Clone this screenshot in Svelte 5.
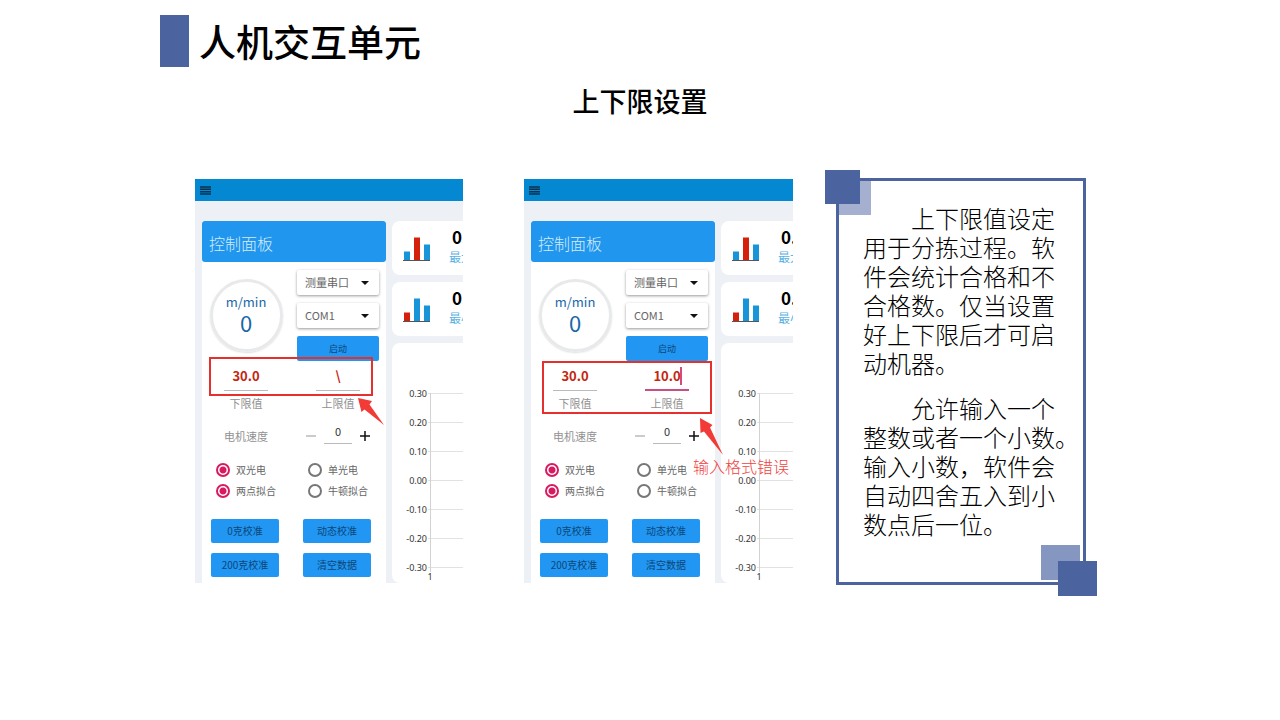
<script>
  const screens = [
    { id: 'a', low: '30.0', high: '\\', editing: false },
    { id: 'b', low: '30.0', high: '10.0', editing: true }
  ];
  const stats = [
    { value: '0.', label: '最大', bars: [9, 23, 16], hot: 1 },
    { value: '0.', label: '最小', bars: [9, 23, 16], hot: 0 }
  ];
  const ticks = ['0.30', '0.20', '0.10', '0.00', '-0.10', '-0.20', '-0.30'];
  const modes = [
    ['双光电', '单光电'],
    ['两点拟合', '牛顿拟合']
  ];
  const actions = ['0克校准', '动态校准', '200克校准', '清空数据'];
  const notes = [
    ['上下限值设定', '用于分拣过程。软', '件会统计合格和不', '合格数。仅当设置', '好上下限后才可启', '动机器。'],
    ['允许输入一个', '整数或者一个小数。', '输入小数，软件会', '自动四舍五入到小', '数点后一位。']
  ];
</script>

<main class="slide">
  <header class="title">
    <span class="marker"></span>
    <h1>人机交互单元</h1>
  </header>
  <h2>上下限设置</h2>

  <div class="content">
    <div class="shots">
      {#each screens as s}
        <section class="shot">
          <div class="appbar">
            <button class="menu" aria-label="菜单">
              <svg width="11" height="9" viewBox="0 0 11 9"><path d="M0 1h11M0 3.3h11M0 5.7h11M0 8h11" stroke="#06324f" stroke-width="1.4" /></svg>
            </button>
          </div>
          <div class="body">
            <div class="panel">
              <h3>控制面板</h3>
              <div class="grid top">
                <div class="dial"><span>m/min</span><b>0</b></div>
                <div class="stack">
                  <div class="pick"><select aria-label="测量串口"><option>测量串口</option></select></div>
                  <div class="pick"><select aria-label="COM1"><option>COM1</option></select></div>
                  <button class="act start">启动</button>
                </div>
              </div>
              <div class="grid">
                <div class="field">
                  <input id="low-{s.id}" value={s.low} />
                  <label for="low-{s.id}">下限值</label>
                </div>
                <div class="field" class:editing={s.editing}>
                  <input id="high-{s.id}" value={s.high} />
                  <label for="high-{s.id}">上限值</label>
                </div>
              </div>
              <div class="grid motor">
                <label for="speed-{s.id}">电机速度</label>
                <div class="stepper">
                  <button aria-label="减"><svg width="10" height="10" viewBox="0 0 10 10"><path d="M0 5h10" stroke="#b5b5b5" stroke-width="1.4" /></svg></button>
                  <input id="speed-{s.id}" value="0" />
                  <button aria-label="加"><svg width="10" height="10" viewBox="0 0 10 10"><path d="M0 5h10M5 0v10" stroke="#111" stroke-width="1.5" /></svg></button>
                </div>
              </div>
              <div class="grid modes">
                {#each modes as row, r}
                  {#each row as name, i}
                    <label><input type="radio" name="mode-{s.id}-{r}" checked={i === 0} />{name}</label>
                  {/each}
                {/each}
              </div>
              <div class="grid actions">
                {#each actions as a}<button class="act">{a}</button>{/each}
              </div>
            </div>
            <div class="side">
              {#each stats as st}
                <div class="card stat">
                  <svg width="27" height="26" viewBox="0 0 27 26">
                    {#each st.bars as h, i}
                      <rect x={1 + i * 10} y={25.5 - h} width="6" height={h} fill={i === st.hot ? '#d5200c' : '#1795d8'} />
                    {/each}
                    <path d="M0 25.5h27" stroke="#555" />
                  </svg>
                  <div><strong>{st.value}</strong><span>{st.label}</span></div>
                </div>
              {/each}
              <div class="card chart">
                <svg width="110" height="240" viewBox="0 0 110 240">
                  {#each ticks as t, i}
                    <path d="M36 {50.5 + i * 29}H110" stroke="#e2e2e2" />
                    <text x="35" y={54 + i * 29} text-anchor="end">{t}</text>
                  {/each}
                  <path d="M38.5 50V229" stroke="#d2d2d2" />
                  <text x="38" y="237" text-anchor="middle">1</text>
                </svg>
              </div>
            </div>
          </div>
          {#if s.editing}
            <div class="mark wide"></div>
            <svg class="arrow second" width="24" height="38" viewBox="0 0 24 38"><path d="M0 0L12.500 7L10 9.500L23 37L4 13.500L0.500 15Z" fill="#f23a36" /></svg>
            <p class="error">输入格式错误</p>
          {:else}
            <div class="mark"></div>
            <svg class="arrow" width="27" height="28" viewBox="0 0 27 28"><path d="M0 0L14 3L11.500 6.500L26 27L6.500 11.500L3.500 14Z" fill="#f23a36" /></svg>
          {/if}
        </section>
      {/each}
    </div>

    <aside class="callout">
      <i class="sq light-a"></i><i class="sq dark-a"></i>
      <i class="sq light-b"></i><i class="sq dark-b"></i>
      {#each notes as lines}
        <p>{#each lines as line}<span>{line}</span>{/each}</p>
      {/each}
    </aside>
  </div>
</main>

<style>
  :global(body) { background: #fff; }
  * { box-sizing: border-box; }
  .slide {
    max-width: 960px;
    margin: 0 auto;
    padding: 15px 0 24px;
    font-family: "Noto Sans CJK SC", "Noto Sans", sans-serif;
    color: #000;
  }
  h1, h2, h3, p { margin: 0; }
  svg { display: block; flex: none; }
  button, input, select { font-family: inherit; margin: 0; padding: 0; border: 0; background: none; }
  .title { display: flex; align-items: center; gap: 10px; }
  .marker { width: 29px; height: 52px; background: #4b639f; }
  h1 { font-size: 37px; line-height: 52px; font-weight: 500; }
  h2 { margin: 19px 0 62px; font-size: 27px; line-height: 30px; font-weight: 500; text-align: center; }
  .content { display: grid; grid-template-columns: 598fr 250fr; gap: 43px; padding: 0 34px 0 35px; }
  .shots { display: grid; grid-template-columns: 268fr 269fr; gap: 61px; padding: 1px 0 2px; }
  .shot { position: relative; min-width: 0; overflow: hidden; background: #edf1f5; }
  .appbar { display: flex; align-items: center; height: 22px; padding-left: 5px; background: #0488d1; }
  .menu { display: flex; }
  .body { display: flex; gap: 6px; padding: 20px 0 0 7px; }
  .panel { flex: 0 0 184px; min-width: 0; padding-bottom: 6px; background: #fff; }
  h3 {
    height: 41px; padding-left: 7px; border-radius: 3px; background: #2096ee;
    color: #d3ebfc; font-size: 16px; line-height: 44px; font-weight: 300;
  }
  .grid {
    display: grid; grid-template-columns: repeat(2, minmax(0, 1fr)); column-gap: 24px;
    padding: 0 14px 0 10px; justify-items: center;
  }
  .top { padding-top: 8px; align-items: center; }
  .dial {
    display: flex; flex-direction: column; align-items: center; justify-content: center;
    width: 73px; height: 73px; padding-bottom: 6px; border: 3px solid #e8e9eb; border-radius: 50%;
    color: #1767a8; box-shadow: 0 1px 2px #0002;
  }
  .dial span { font-size: 13px; line-height: 18px; }
  .dial b { font-size: 22px; line-height: 22px; font-weight: 400; }
  .stack { display: flex; flex-direction: column; gap: 8px; width: 82px; }
  .pick { position: relative; height: 25px; border-radius: 2px; box-shadow: 0 1px 3px #0006; }
  .pick::after {
    content: ""; position: absolute; right: 10px; top: 11px; pointer-events: none;
    border: 4px solid transparent; border-top-color: #111; border-bottom: 0;
  }
  select { appearance: none; display: block; width: 100%; height: 25px; padding: 0 0 2px 8px; color: #666; font-size: 11px; }
  .act { height: 24px; border-radius: 2px; background: #2196f3; color: #0d4677; font-size: 10px; line-height: 24px; }
  .start { height: 25px; font-size: 9px; }
  .field { display: flex; flex-direction: column; align-items: center; gap: 4px; position: relative; }
  .field input {
    width: 44px; height: 30px; border-bottom: 1px solid #bbb; color: #c5260f;
    font-size: 13px; font-weight: 700; text-align: center;
  }
  .editing input { border-bottom: 2px solid #c94f80; }
  .editing::after { content: ""; position: absolute; right: 7px; top: 6px; width: 2px; height: 18px; background: #d9487c; }
  .field label, .motor label { color: #919191; font-size: 11px; line-height: 16px; white-space: nowrap; }
  .motor { margin-top: 11px; height: 28px; align-items: center; }
  .stepper { display: flex; align-items: center; gap: 8px; height: 28px; }
  .stepper button { display: flex; }
  .stepper input {
    align-self: flex-start; width: 28px; height: 22px; padding-bottom: 3px; border-bottom: 1px solid #bbb;
    color: #333; font-size: 11px; text-align: center;
  }
  .modes { margin-top: 9px; justify-items: start; }
  .modes label {
    display: flex; align-items: center; gap: 6px; height: 21px; padding-left: 4px;
    color: #666; font-size: 10px; white-space: nowrap;
  }
  .modes input { appearance: none; flex: none; width: 14px; height: 14px; border: 2px solid #777; border-radius: 50%; }
  .modes input:checked { border-color: #d81b60; background: radial-gradient(circle, #d81b60 3px, #fff 4px); }
  .actions { margin-top: 18px; padding: 0 15px 0 9px; row-gap: 10px; justify-items: stretch; }
  .side { flex: 0 0 110px; display: flex; flex-direction: column; gap: 7px; }
  .card { border-radius: 8px; background: #fff; }
  .stat { display: flex; align-items: center; gap: 19px; height: 54px; padding-left: 11px; }
  .stat strong { display: block; padding-left: 3px; font-size: 17px; line-height: 20px; font-weight: 700; }
  .stat div { padding-bottom: 2px; }
  .stat span { display: block; color: #5bb2e2; font-size: 12px; line-height: 20px; }
  .chart { flex: 1; }
  .chart text { font-family: "Noto Sans", sans-serif; font-size: 9px; fill: #333; }
  .mark { position: absolute; left: 14px; top: 178px; width: 164px; height: 39px; border: 2px solid #e5302d; }
  .wide { left: 18px; top: 182px; width: 170px; height: 53px; }
  .arrow { position: absolute; left: 163px; top: 219px; }
  .second { left: 176px; top: 239px; }
  .error { position: absolute; left: 169px; top: 277px; color: #f0413e; font-size: 16px; line-height: 20px; font-weight: 300; white-space: nowrap; }
  .callout { position: relative; border: 3px solid #4b639f; padding: 22px 0 0 24px; font-size: 24px; line-height: 29px; font-weight: 300; }
  .callout p { position: relative; margin-bottom: 16px; }
  .callout span { display: block; white-space: nowrap; }
  .callout span:first-child { padding-left: 48px; }
  .sq { position: absolute; width: 39px; height: 35px; background: #4b639f; }
  .dark-a { left: -14px; top: -11px; width: 35px; height: 34px; }
  .light-a { left: 0; top: 0; width: 32px; height: 34px; background: #a5b0d1; }
  .light-b { right: 3px; bottom: 2px; background: #8596c1; }
  .dark-b { right: -14px; bottom: -14px; }
</style>
